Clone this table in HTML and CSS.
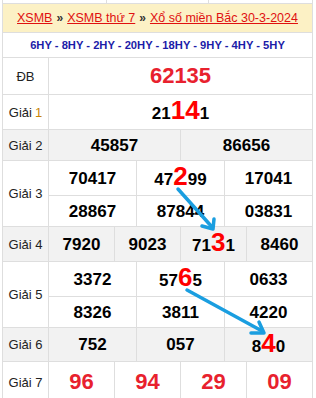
FILE: index.html
```html
<!DOCTYPE html>
<html lang="vi">
<head>
    <meta charset="UTF-8">
    <meta name="viewport" content="width=device-width, initial-scale=1.0">
    <title>XSMB 30-3-2024</title>
    <link rel="stylesheet" href="styles.css">
</head>
<body>
    <div class="page">
        <div class="board">
            <div class="sliver"><span></span><span></span><span></span></div>

            <div class="head">
                <a href="#">XSMB</a> <b>»</b> <a href="#">XSMB thứ 7</a> <b>»</b> <a href="#">Xổ số miền Bắc 30-3-2024</a>
            </div>
            <div class="codes">6HY - 8HY - 2HY - 20HY - 18HY - 9HY - 4HY - 5HY</div>

            <div class="lbl">ĐB</div>
            <div class="num db full">62135</div>

            <div class="lbl">Giải <span class="one">1</span></div>
            <div class="num full"><span>21<span class="hl">14</span>1</span></div>

            <div class="lbl gray">Giải 2</div>
            <div class="num gray c2">45857</div>
            <div class="num gray c2">86656</div>

            <div class="lbl r2">Giải 3</div>
            <div class="num c3">70417</div>
            <div class="num c3"><span>47<span class="hl">2</span>99</span></div>
            <div class="num c3">17041</div>
            <div class="num c3">28867</div>
            <div class="num c3">87844</div>
            <div class="num c3">03831</div>

            <div class="lbl gray">Giải 4</div>
            <div class="num gray c4">7920</div>
            <div class="num gray c4">9023</div>
            <div class="num gray c4"><span>71<span class="hl">3</span>1</span></div>
            <div class="num gray c4">8460</div>

            <div class="lbl r2">Giải 5</div>
            <div class="num c3">3372</div>
            <div class="num c3"><span>57<span class="hl">6</span>5</span></div>
            <div class="num c3">0633</div>
            <div class="num c3">8326</div>
            <div class="num c3">3811</div>
            <div class="num c3">4220</div>

            <div class="lbl gray">Giải 6</div>
            <div class="num gray c3">752</div>
            <div class="num gray c3">057</div>
            <div class="num gray c3"><span>8<span class="hl">4</span>0</span></div>

            <div class="lbl">Giải 7</div>
            <div class="num big c4">96</div>
            <div class="num big c4">94</div>
            <div class="num big c4">29</div>
            <div class="num big c4">09</div>
        </div>

        <svg class="arrows" width="316" height="398" viewBox="0 0 316 398">
            <g fill="none" stroke="#1a9ee0" stroke-width="3.5" stroke-linecap="round" stroke-linejoin="round">
                <path d="M178 189 L212 227"/>
                <path d="M202 226 L213 229 L214 219"/>
                <path d="M187 290 L262 331"/>
                <path d="M251 333 L264 333 L259 322"/>
            </g>
        </svg>
    </div>
</body>
</html>
```

FILE: styles.css
```css
* {
    margin: 0;
    padding: 0;
    box-sizing: border-box;
}

body {
    font-family: "Liberation Sans", Arial, sans-serif;
    background: #fff;
    color: #000;
}

.page {
    position: relative;
    width: 316px;
    height: 398px;
    overflow: hidden;
    padding-left: 2px;
}

.board {
    width: 311px;
    margin-top: -1px;
    display: grid;
    grid-template-columns: 45px repeat(12, 21px);
    grid-template-rows: 3px 28px 24px 36px 34px 30px 34px 30px 34px 34px 30px 33px 40px;
    gap: 1px;
    padding: 1px;
    background: #dedede;
}

.sliver {
    grid-column: 1 / -1;
    display: flex;
    gap: 1px;
}

.sliver span {
    background: #fff;
    width: 103px;
}

.sliver span:nth-child(2) {
    width: 101px;
}

.head {
    grid-column: 1 / -1;
    background: #fcf1c5;
    display: flex;
    align-items: center;
    justify-content: center;
    gap: 4px;
    font-size: 12.5px;
    white-space: nowrap;
}

.head a {
    color: #e01010;
    text-decoration: underline;
}

.head b {
    color: #333;
    font-size: 12px;
}

.codes {
    grid-column: 1 / -1;
    background: #fff;
    display: flex;
    align-items: center;
    justify-content: center;
    color: #1c1ca8;
    font-weight: bold;
    font-size: 11.2px;
}

.lbl {
    background: #fff;
    display: flex;
    align-items: center;
    justify-content: center;
    font-size: 13px;
    color: #222;
}

.lbl .one {
    color: #c8860a;
    margin-left: 3px;
}

.r2 {
    grid-row: span 2;
}

.num {
    background: #fff;
    display: flex;
    align-items: center;
    justify-content: center;
    font-weight: bold;
    font-size: 17px;
    line-height: 1;
}

.gray {
    background: #f2f2f2;
}

.full { grid-column: span 12; }
.c2 { grid-column: span 6; }
.c3 { grid-column: span 4; }
.c4 { grid-column: span 3; }

.db {
    font-size: 22px;
    color: #e8212e;
}

.big {
    font-size: 22px;
    color: #e8212e;
}

.hl {
    color: #f00;
    font-size: 26px;
    line-height: 17px;
}

.arrows {
    position: absolute;
    left: 0;
    top: 0;
    pointer-events: none;
}
```
